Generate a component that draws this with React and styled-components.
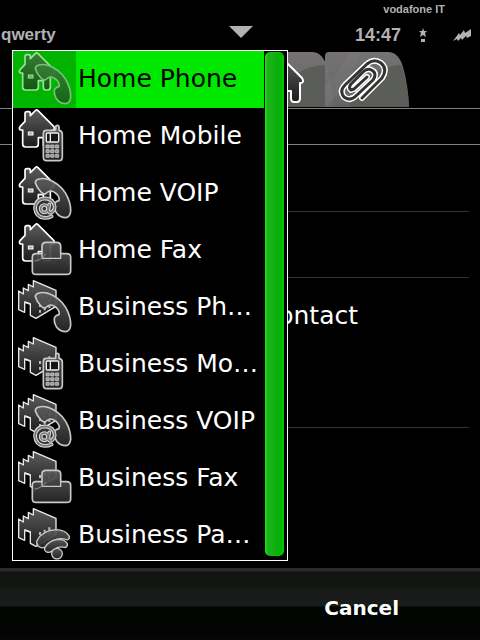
import React from 'react'
import styled, { createGlobalStyle } from 'styled-components';

const ITEMS = [
    { label: 'Home Phone', place: 'home', device: 'handset' },
    { label: 'Home Mobile', place: 'home', device: 'mobile' },
    { label: 'Home VOIP', place: 'home', device: 'voip' },
    { label: 'Home Fax', place: 'home', device: 'fax' },
    { label: 'Business Ph…', place: 'business', device: 'handset' },
    { label: 'Business Mo…', place: 'business', device: 'mobile' },
    { label: 'Business VOIP', place: 'business', device: 'voip' },
    { label: 'Business Fax', place: 'business', device: 'fax' },
    { label: 'Business Pa…', place: 'business', device: 'pager' },
]

const HANDSET = 'M84 52 Q98 47 114 52 Q148 64 167 94 Q183 122 182 148 Q180 165 168 167 Q150 167 139 152 Q130 136 134 124 Q138 117 147 116 Q150 108 141 97 Q131 86 120 87 Q112 90 107 95 Q100 98 93 90 Q80 76 76 62 Q76 55 84 52Z'

const HOUSE = 'M76 17 Q80 12 84 17 L131 64 Q136 70 130 75 L121 78 V118 Q121 126 113 126 H107 Q100 126 100 118 V98 H85 V118 Q85 126 77 126 H47 Q38 126 38 118 V75 H31 Q26 71 30 65 L45 49 V26 Q45 20 51 20 H56 Q61 20 61 26 V32Z'

function Place({ type }) {
    if (type === 'home') {
        return (
            <g>
                <path d={HOUSE} fill="url(#body)" stroke="#fff" strokeWidth="5" strokeLinejoin="round" />
                <rect x="55" y="81" width="14" height="9" fill="#aaa" stroke="#fff" strokeWidth="3" />
            </g>
        )
    }
    return (
        <g>
            <path d="M26 45 L40 54 V36 L55 44 V25 L70 33 V14 L138 43 V91 L78 127 L61 118 V84 L44 78 V109 L26 101Z" fill="url(#body)" stroke="#e8e8e8" strokeWidth="4" strokeLinejoin="round" />
            <path d="M44 78 L61 84" stroke="#e8e8e8" strokeWidth="4" />
            <path d="M90 84 v9 M104 77 v9 M118 70 v9 M90 102 v8 M104 95 v8 M118 88 v8" stroke="#bbb" strokeWidth="6" />
        </g>
    )
}

function Device({ type }) {
    const line = { fill: 'url(#glass)', stroke: '#c8c8c8', strokeWidth: 5, strokeLinejoin: 'round' }
    if (type === 'mobile') {
        return (
            <g>
                <path d="M108 76 H137 V66 Q137 61 142 61 Q147 61 147 66 V76 Q157 78 157 88 V156 Q157 167 147 167 H110 Q100 167 100 156 V86 Q100 76 108 76Z" {...line} />
                <rect x="109" y="84" width="37" height="27" rx="3" fill="#151515" stroke="#eee" strokeWidth="4" />
                <path d="M121 85 V110" stroke="#eee" strokeWidth="4" />
                {[120, 134, 148].map(y => [108, 122, 136].map(x => (
                    <rect key={x + '-' + y} x={x} y={y} width="10" height="9" rx="1" fill="#999" stroke="#ddd" strokeWidth="2" />
                )))}
            </g>
        )
    }
    if (type === 'fax') {
        return (
            <g>
                <path d="M78 104 H96 V80 Q97 70 108 70 H140 Q151 70 152 80 V104 H170 Q182 104 182 115 V155 Q182 166 170 166 H78 Q67 166 67 155 V115 Q67 104 78 104Z" {...line} />
                <path d="M96 104 V118 H152 V104" fill="none" stroke="#c8c8c8" strokeWidth="4" />
                <path d="M74 126 Q96 124 108 104" fill="none" stroke="#888" strokeWidth="3" />
            </g>
        )
    }
    if (type === 'pager') {
        return (
            <g>
                <path d="M81 110 Q96 80 138 77 Q166 77 178 97 Q180 104 172 108 Q138 94 106 128 Q96 136 85 127 Q78 120 81 110Z" {...line} strokeWidth="4" />
                <path d="M104 132 Q118 106 150 106 Q166 108 172 119 Q174 127 165 131 Q148 124 130 138 Q121 148 110 144 Q102 140 104 132Z" {...line} strokeWidth="4" />
                <circle cx="141" cy="149" r="16" {...line} strokeWidth="4" />
            </g>
        )
    }
    return (
        <g>
            <path d={HANDSET} {...line} />
            {type === 'voip' && (
                <g fill="none" strokeLinecap="round">
                    <circle cx="105" cy="139" r="29" fill="#333" />
                    {[['#ddd', 11], ['#777', 5]].map(([color, width]) => (
                        <g key={color} stroke={color} strokeWidth={width}>
                            <circle cx="103" cy="140" r="11" />
                            <path d="M118 127 L115 145 Q116 153 123 152 Q134 147 134 134 Q131 111 106 109 Q77 110 75 138 Q77 165 104 168 Q116 168 125 163" />
                        </g>
                    ))}
                </g>
            )}
        </g>
    )
}

function HouseIcon() {
    return (
        <TabIcon viewBox="0 0 54 54" aria-hidden="true">
            <path d="M21 4 L43 26 Q46 31 41 31 V46 Q41 50 38 50 H35 Q32 50 32 46 V39 H25 V48 Q25 50 22 50 H8 Q5 50 5 47 V31 H1 V27 L6 21 V7 H12 V13Z" fill="url(#body)" stroke="#fff" strokeWidth="2" strokeLinejoin="round" />
        </TabIcon>
    )
}

function ClipIcon() {
    const clip = 'M27 46 L47 26 Q53 17 46 11 Q39 6 32 12 L10 33 Q4 39 9 45 Q15 50 22 43 L38 28 Q42 22 38 19 Q33 15 28 20 L16 32 Q13 36 16 38 L19 37 L32 25'
    return (
        <TabIcon viewBox="0 0 54 54" aria-hidden="true">
            <g fill="none" strokeLinecap="round" strokeLinejoin="round">
                <path d={clip} stroke="#fff" strokeWidth="6" />
                <path d={clip} stroke="#333" strokeWidth="3" />
            </g>
        </TabIcon>
    )
}

function TabShape() {
    return (
        <Shape viewBox="0 0 84 55" aria-hidden="true">
            <path d="M0 55 V4 Q0 0 4 0 H64 Q74 1 78 15 Q83 32 84 55Z" fill="url(#tab)" />
            <path d="M0 55 V34 Q14 20 24 0 H36 Q24 34 0 55Z" fill="#8a8a8a" opacity="0.25" />
            <path d="M24 55 Q40 14 76 13 Q83 32 84 55Z" fill="#5f625d" />
        </Shape>
    )
}

function App() {
    return (
        <Page>
            <GlobalStyle />
            <Defs aria-hidden="true">
                <linearGradient id="body" x1="0" y1="0" x2="0" y2="1">
                    <stop offset="0" stopColor="#5c5c5c" />
                    <stop offset="1" stopColor="#1c1c1c" />
                </linearGradient>
                <linearGradient id="glass" x1="0" y1="0" x2="0" y2="1">
                    <stop offset="0" stopColor="#5c5c5c" stopOpacity="0.92" />
                    <stop offset="1" stopColor="#262626" stopOpacity="0.95" />
                </linearGradient>
                <linearGradient id="tab" x1="0" y1="0" x2="0" y2="1">
                    <stop offset="0" stopColor="#7c787c" />
                    <stop offset="1" stopColor="#686b68" />
                </linearGradient>
            </Defs>
            <Header>
                <Carrier>vodafone IT</Carrier>
                <Status>
                    <Title>qwerty</Title>
                    <Arrow viewBox="0 0 24 12" aria-hidden="true">
                        <path d="M0 0 H24 L12 12Z" />
                    </Arrow>
                    <Indicators>
                        <Time>14:47</Time>
                        <Star viewBox="0 0 8 14" aria-hidden="true">
                            <path d="M4 0 L5 3 H8 L6 5 L7 9 L4 7 L1 9 L2 5 L0 3 H3Z M2 11 H6 V14 H2Z" />
                        </Star>
                        <Bolt viewBox="0 0 18 12" aria-hidden="true">
                            <path d="M0 12 L6 4 L7 6 L11 1 L12 4 L18 0 V7 L14 9 L13 7 L9 11 L8 9 L5 12 L4 10Z" />
                        </Bolt>
                    </Indicators>
                </Status>
            </Header>
            <Tabs>
                <Tab aria-label="Address">
                    <TabShape />
                    <HouseIcon />
                </Tab>
                <Tab aria-label="Attachments">
                    <TabShape />
                    <ClipIcon />
                </Tab>
            </Tabs>
            <SectionBar />
            <Fields>
                <Field />
                <Field />
                <TallField>contact</TallField>
            </Fields>
            <Footer>
                <Cancel>Cancel</Cancel>
            </Footer>
            <Popup>
                <List>
                    {ITEMS.map((item, i) => (
                        <li key={item.label}>
                            <Item $selected={i === 0}>
                                <IconBox $selected={i === 0}>
                                    <ItemIcon viewBox="9 9 189 171" $selected={i === 0} aria-hidden="true">
                                        <Place type={item.place} />
                                        <Device type={item.device} />
                                    </ItemIcon>
                                </IconBox>
                                <Label>{item.label}</Label>
                            </Item>
                        </li>
                    ))}
                </List>
                <ScrollThumb />
            </Popup>
        </Page>
    )
}

export default App

const GlobalStyle = createGlobalStyle`
* { box-sizing: border-box; }
body {
    margin: 0;
    background: #000;
    color: #fff;
    font-family: "DejaVu Sans", sans-serif;
}
button {
    border: 0;
    padding: 0;
    background: none;
    color: inherit;
    font: inherit;
}
`

const Page = styled.div`
position: relative;
display: flex;
flex-direction: column;
min-height: 100vh;
overflow: hidden;
`

const Defs = styled.svg`
position: absolute;
width: 0;
height: 0;
`

const Header = styled.header`
height: 52px;
color: #b4b0b4;
fill: #b4b0b4;
font-family: "Liberation Sans", sans-serif;
font-weight: bold;
`

const Carrier = styled.div`
padding-right: 35px;
font-size: 11px;
line-height: 18px;
text-align: right;
`

const Status = styled.div`
display: grid;
grid-template-columns: 1fr auto 1fr;
align-items: center;
height: 34px;
padding: 0 9px 0 1px;
`

const Title = styled.div`
font-size: 17px;
line-height: 20px;
`

const Arrow = styled.svg`
width: 24px;
height: 12px;
margin: 0 0 6px 10px;
`

const Indicators = styled.div`
display: flex;
justify-content: flex-end;
align-items: center;
`

const Time = styled.div`
font-size: 18px;
line-height: 20px;
`

const Star = styled.svg`
width: 8px;
height: 14px;
margin: 0 26px 0 18px;
`

const Bolt = styled.svg`
width: 18px;
height: 12px;
`

const Tabs = styled.nav`
display: flex;
height: 56px;
padding-left: 249px;
`

const Tab = styled.button`
display: grid;
width: 84px;
height: 55px;
margin-right: -8px;
> * { grid-area: 1 / 1; }
`

const Shape = styled.svg`
width: 84px;
height: 55px;
opacity: 0.95;
`

const TabIcon = styled.svg`
position: relative;
width: 54px;
height: 54px;
margin-left: 10px;
`

const SectionBar = styled.div`
height: 37px;
border: 1px solid #808080;
border-width: 1px 0;
`

const Fields = styled.main`
flex: 1;
padding: 1px 11px 0;
`

const Field = styled.div`
height: 66px;
border-bottom: 1px solid #333;
font-size: 25px;
line-height: 76px;
`

const TallField = styled(Field)`
height: 150px;
padding-right: 111px;
text-align: right;
`

const Footer = styled.footer`
display: flex;
justify-content: flex-end;
align-items: center;
height: 72px;
padding: 8px 81px 0 0;
background: linear-gradient(#2a2a2a 3px, #101510 4px, #12170f 20px, #191919 21px, #191919 30px, #191d19 31px, #191d19 38px, #020502 39px, #020502 65px, #070707);
`

const Cancel = styled.button`
font-size: 20px;
font-weight: bold;
line-height: 24px;
`

const Popup = styled.div`
position: absolute;
top: 50px;
bottom: 79px;
left: 12px;
display: flex;
width: 276px;
border: 1px solid #fff;
background: #000;
overflow: hidden;
`

const List = styled.ul`
flex: 1;
min-width: 0;
margin: 0;
padding: 0;
list-style: none;
`

const Item = styled.button`
display: flex;
align-items: center;
width: 100%;
height: 57px;
background: ${p => p.$selected ? '#00e800' : '#000'};
color: ${p => p.$selected ? '#000' : '#fff'};
text-align: left;
`

const IconBox = styled.span`
flex: none;
width: 63px;
height: 57px;
background: ${p => p.$selected ? '#00b400' : 'none'};
`

const ItemIcon = styled.svg`
display: block;
width: 63px;
height: 57px;
opacity: ${p => p.$selected ? 0.6 : 1};
`

const Label = styled.span`
flex: 1;
min-width: 0;
padding: 0 0 2px 2px;
font-size: 25px;
line-height: 32px;
white-space: nowrap;
`

const ScrollThumb = styled.div`
width: 19px;
margin: 1px 3px 4px 1px;
border: 1px solid #00c800;
border-left: 2px solid #14d814;
border-radius: 5px;
background: linear-gradient(90deg, #1cb41c, #16b016 40%, #08b008 60%, #08b008 85%, #00c400);
`
